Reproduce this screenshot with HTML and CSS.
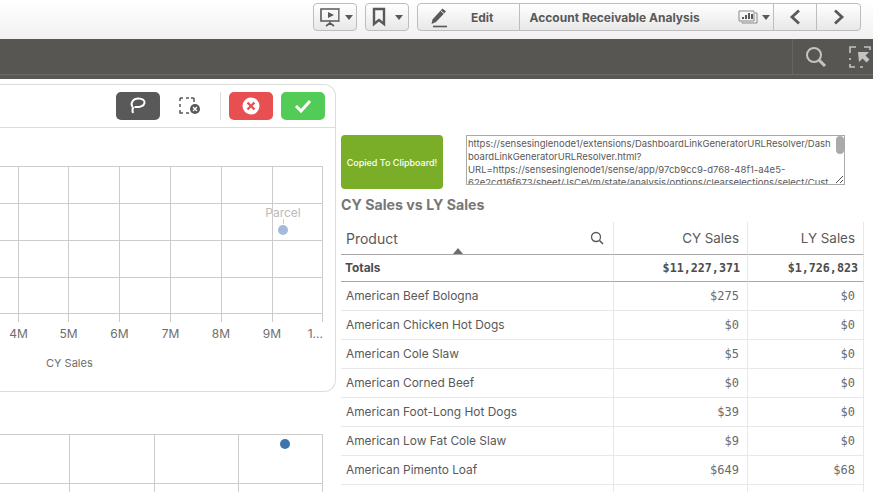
FILE: index.html
```html
<!DOCTYPE html>
<html lang="en">
<head>
  <meta charset="UTF-8" />
  <title>Account Receivable Analysis</title>
  <link rel="stylesheet" href="styles.css">
</head>
<body>
  <header class="toolbar">
    <button class="tool-btn">
      <svg width="26" height="24" viewBox="0 0 26 24"><path d="M3 4h18v12H3z" fill="none" stroke="#595959" stroke-width="1.600"/><path d="M21.500 4v12" stroke="#e0a040"/><path d="M10 7l6 3-6 3z" fill="#595959"/><path d="M12 16v3M8 21l4-3 4 3" fill="none" stroke="#595959" stroke-width="1.600"/></svg>
      <span class="caret"></span>
    </button>
    <button class="tool-btn tool-btn-mark">
      <svg width="14" height="20" viewBox="0 0 14 20"><path d="M2 2h10v15l-5-4-5 4z" fill="none" stroke="#595959" stroke-width="2.400"/></svg>
      <span class="caret"></span>
    </button>
    <div class="btn-group">
      <div class="seg seg-edit">
        <svg width="20" height="22" viewBox="0 0 20 22"><path d="M13.500 2.500l3.500 3L7 16l-4.500 2 1-4.500z" fill="#595959"/><path d="M12 5l3.500 3" stroke="#f4f4f4"/><path d="M4 20.500h14" stroke="#595959" stroke-width="1.600"/></svg>
        <span>Edit</span>
      </div>
      <div class="seg seg-title">
        <span>Account Receivable Analysis</span>
        <svg class="sheet-icon" width="20" height="14" viewBox="0 0 20 14"><path d="M1 1h15v10H1z" fill="none" stroke="#8a8a8a"/><path d="M17 3h2v10H4v-1" fill="none" stroke="#8a8a8a"/><path d="M4 9h2V7H4zM7 9h2V5H7zM10 9h2V3h-2zM13 9h2V4h-2z" fill="#595959"/></svg>
        <span class="caret"></span>
      </div>
      <div class="seg seg-nav">
        <svg width="14" height="18" viewBox="0 0 14 18"><path d="M11 2.500L4 9l7 6.500" fill="none" stroke="#595959" stroke-width="2.800"/></svg>
      </div>
      <div class="seg seg-nav">
        <svg width="14" height="18" viewBox="0 0 14 18"><path d="M3 2.500L10 9l-7 6.500" fill="none" stroke="#595959" stroke-width="2.800"/></svg>
      </div>
    </div>
  </header>

  <div class="darkbar">
    <div class="dark-tools">
      <svg width="24" height="24" viewBox="0 0 24 24"><circle cx="10" cy="10" r="7" fill="none" stroke="#c4c4c4" stroke-width="2"/><path d="M15 15l6 6" stroke="#c4c4c4" stroke-width="3"/></svg>
      <svg width="22" height="22" viewBox="0 0 22 22"><path d="M1 7V1h6M15 1h6v3M1 12v2M1 18v3h5M11 21h3" fill="none" stroke="#c4c4c4" stroke-width="1.600"/><path d="M9 6h11l-3.500 3.500 4 4-3 3-4-4L10 16z" fill="#c4c4c4"/></svg>
    </div>
  </div>
  <div class="darkstrip"></div>

  <main class="content">
    <section class="left">
      <div class="card">
        <div class="card-tools">
          <button class="sel-btn sel-lasso">
            <svg width="20" height="20" viewBox="0 0 20 20"><path d="M4.500 11C2 7 5 2.500 10.500 2.500c4 0 6.500 2 6 4.500-.5 3-5 4.500-10 4" fill="none" stroke="#fff" stroke-width="2"/><path d="M5.500 11c-1 1.500-1.500 3.500-.5 6" fill="none" stroke="#fff" stroke-width="2"/></svg>
          </button>
          <div class="clear-icon">
            <svg width="22" height="20" viewBox="0 0 22 20"><path d="M1 2h3M7 2h3M12 2h3M1 2v3M1 8v3M1 14v3h3M7 17h3M15 2v4" fill="none" stroke="#595959" stroke-width="1.500"/><circle cx="16" cy="13" r="5" fill="#595959"/><path d="M14 11l4 4M18 11l-4 4" stroke="#fff" stroke-width="1.400"/></svg>
          </div>
          <span class="tools-sep"></span>
          <button class="sel-btn sel-cancel">
            <svg width="18" height="18" viewBox="0 0 18 18"><circle cx="9" cy="9" r="8.500" fill="#fff"/><path d="M5.500 5.500l7 7M12.500 5.500l-7 7" stroke="#e84f50" stroke-width="2.400"/></svg>
          </button>
          <button class="sel-btn sel-ok">
            <svg width="18" height="16" viewBox="0 0 18 16"><path d="M2 8l5 5L16 3" fill="none" stroke="#fff" stroke-width="3"/></svg>
          </button>
        </div>

        <div class="plot">
          <div class="cell"></div><div class="cell"></div><div class="cell"></div><div class="cell"></div><div class="cell"></div><div class="cell"></div><div class="cell"></div>
          <div class="cell"></div><div class="cell"></div><div class="cell"></div><div class="cell"></div><div class="cell"></div><div class="cell"></div><div class="cell"></div>
          <div class="cell"></div><div class="cell"></div><div class="cell"></div><div class="cell"></div><div class="cell"></div><div class="cell"></div><div class="cell"></div>
          <div class="cell"></div><div class="cell"></div><div class="cell"></div><div class="cell"></div><div class="cell"></div><div class="cell"></div><div class="cell"></div>
          <div class="tick"></div><div class="tick"></div><div class="tick"></div><div class="tick"></div><div class="tick"></div><div class="tick"></div><div class="tick"></div>
          <span class="point-label">Parcel</span>
          <span class="point-stem"></span>
          <span class="point point-faded"></span>
        </div>
        <div class="axis">
          <span>4M</span><span>5M</span><span>6M</span><span>7M</span><span>8M</span><span>9M</span><span class="axis-last">1...</span>
        </div>
        <div class="axis-title">CY Sales</div>
      </div>

      <div class="plot2">
        <div class="cell"></div><div class="cell"></div><div class="cell"></div><div class="cell"></div>
        <div class="cell"></div><div class="cell"></div><div class="cell"></div><div class="cell"></div>
        <span class="point point-solid"></span>
      </div>
    </section>

    <section class="right">
      <div class="link-row">
        <button class="copied">Copied To Clipboard!</button>
        <div class="url-box">
          <textarea class="url" readonly>https://sensesinglenode1/extensions/DashboardLinkGeneratorURLResolver/DashboardLinkGeneratorURLResolver.html?
URL=https://sensesinglenode1/sense/app/97cb9cc9-d768-48f1-a4e5-62e2cd16f673/sheet/JsCeVm/state/analysis/options/clearselections/select/Customer/American%20Beef%20Bologna/select/Product/American%20Chicken%20Hot%20Dogs</textarea>
          <span class="url-thumb"></span>
          <svg class="url-grip" width="9" height="9" viewBox="0 0 9 9"><path d="M1 8l7-7M5 8l3-3" stroke="#555"/></svg>
        </div>
      </div>
      <h2 class="table-title">CY Sales vs LY Sales</h2>
      <table class="sales">
        <colgroup><col class="col-product"><col class="col-cy"><col class="col-ly"></colgroup>
        <thead>
          <tr>
            <th class="th-product">
              <div class="th-inner">
                <span>Product</span>
                <svg width="14" height="14" viewBox="0 0 14 14"><circle cx="6" cy="6" r="4.500" fill="none" stroke="#595959" stroke-width="1.300"/><path d="M9.500 9.500l3.500 3.500" stroke="#595959" stroke-width="1.600"/></svg>
              </div>
              <span class="sort-arrow"></span>
            </th>
            <th class="num-head">CY Sales</th>
            <th class="num-head">LY Sales</th>
          </tr>
        </thead>
        <tbody>
          <tr class="totals"><td>Totals</td><td class="num">$11,227,371</td><td class="num">$1,726,823</td></tr>
          <tr><td>American Beef Bologna</td><td class="num">$275</td><td class="num">$0</td></tr>
          <tr><td>American Chicken Hot Dogs</td><td class="num">$0</td><td class="num">$0</td></tr>
          <tr><td>American Cole Slaw</td><td class="num">$5</td><td class="num">$0</td></tr>
          <tr><td>American Corned Beef</td><td class="num">$0</td><td class="num">$0</td></tr>
          <tr><td>American Foot-Long Hot Dogs</td><td class="num">$39</td><td class="num">$0</td></tr>
          <tr><td>American Low Fat Cole Slaw</td><td class="num">$9</td><td class="num">$0</td></tr>
          <tr><td>American Pimento Loaf</td><td class="num">$649</td><td class="num">$68</td></tr>
          <tr><td></td><td class="num"></td><td class="num"></td></tr>
        </tbody>
      </table>
    </section>
  </main>
</body>
</html>
```

FILE: styles.css
```css
html, body {
  margin: 0;
  height: 100%;
  overflow: hidden;
}
body {
  font-family: Inter, "Noto Sans", sans-serif;
  font-size: 12px;
  color: #595959;
  background: #fff;
}
button {
  font-family: inherit;
  padding: 0;
}

/* top bar */
.toolbar {
  height: 39px;
  box-sizing: border-box;
  padding: 3px 12px 0 313px;
  display: flex;
  align-items: flex-start;
  gap: 8px;
  background: linear-gradient(#fff, #f1f1f1);
}
.tool-btn, .btn-group {
  height: 28px;
  box-sizing: border-box;
  border: 1px solid #bdbdbd;
  border-radius: 4px;
  background: linear-gradient(#fff, #e8e8e8);
}
.tool-btn {
  width: 44px;
  display: flex;
  align-items: center;
  justify-content: center;
  gap: 1px;
}
.tool-btn-mark {
  gap: 9px;
}
.caret {
  width: 0;
  height: 0;
  border-left: 4px solid transparent;
  border-right: 4px solid transparent;
  border-top: 5px solid #595959;
}
.btn-group {
  display: flex;
  width: 444px;
}
.seg {
  display: flex;
  align-items: center;
  border-right: 1px solid #bdbdbd;
  font-weight: 700;
}
.seg:last-child {
  border-right: none;
}
.seg-edit {
  width: 102px;
  box-sizing: border-box;
  padding-left: 11px;
}
.seg-edit span {
  margin-left: 22px;
}
.seg-title {
  width: 256px;
  box-sizing: border-box;
  padding: 0 3px 0 10px;
}
.sheet-icon {
  margin-left: auto;
  margin-right: 4px;
}
.seg-nav {
  width: 43px;
  box-sizing: border-box;
  justify-content: center;
}

.darkbar {
  height: 35px;
  background: #575653;
  border-bottom: 1px solid #6b6a67;
  display: flex;
  justify-content: flex-end;
}
.dark-tools {
  width: 81px;
  box-sizing: border-box;
  border-left: 1px solid #666562;
  display: flex;
  align-items: center;
  gap: 21px;
  padding-left: 11px;
}
.darkstrip {
  height: 4px;
  background: #595855;
}

/* main */
.content {
  display: flex;
}
.left {
  width: 341px;
  flex: none;
  padding-top: 5px;
}

.card {
  width: 336px;
  height: 308px;
  box-sizing: border-box;
  border: 1px solid #dcdcdc;
  border-left: none;
  border-radius: 0 12px 12px 0;
  overflow: hidden;
}
.card-tools {
  height: 43px;
  box-sizing: border-box;
  border-bottom: 1px solid #dcdcdc;
  padding: 7px 10px 0 0;
  display: flex;
  justify-content: flex-end;
  align-items: flex-start;
}
.sel-btn {
  width: 44px;
  height: 28px;
  border: none;
  border-radius: 5px;
  display: flex;
  align-items: center;
  justify-content: center;
}
.sel-lasso { background: #595959; }
.sel-cancel { background: #e84f50; }
.sel-ok { background: #52cc57; margin-left: 8px; }
.clear-icon {
  width: 22px;
  height: 28px;
  margin: 0 19px;
  display: flex;
  align-items: center;
}
.tools-sep {
  width: 1px;
  height: 28px;
  background: #dcdcdc;
  margin-right: 8px;
}

.plot {
  position: relative;
  margin-top: 38px;
  width: 323px;
  border-top: 1px solid #ccc;
  display: grid;
  grid-template-columns: 19px 50px 51px 51px 51px 51px 50px;
  grid-template-rows: 37px 37px 37px 36px 8px;
}
.cell, .tick {
  box-sizing: border-box;
  border-right: 1px solid #ccc;
}
.cell {
  border-bottom: 1px solid #ccc;
}
.point-label {
  position: absolute;
  left: 253px;
  width: 60px;
  top: 38px;
  text-align: center;
  font-size: 12px;
  color: #bbb;
}
.point-stem {
  position: absolute;
  left: 283px;
  top: 52px;
  width: 1px;
  height: 5px;
  background: #ccc;
}
.point {
  position: absolute;
  width: 10px;
  height: 10px;
  border-radius: 50%;
}
.point-faded {
  left: 278px;
  top: 58px;
  background: #a3bbd9;
}
.axis {
  display: grid;
  grid-template-columns: 37px 63px 39px 63px 38px 64px 19px;
  margin-top: 3px;
  width: 323px;
  text-align: center;
  color: #6e6e6e;
  line-height: 17px;
}
.axis-last {
  text-align: right;
  white-space: nowrap;
}
.axis-title {
  margin-top: 13px;
  padding-left: 46px;
  font-size: 11px;
  color: #6e6e6e;
  line-height: 17px;
}

.plot2 {
  position: relative;
  margin-top: 42px;
  width: 323px;
  border-top: 1px solid #ccc;
  display: grid;
  grid-template-columns: 70px 85px 84px 84px;
  grid-template-rows: 49px 49px;
}
.point-solid {
  left: 280px;
  top: 4px;
  background: #3e74ad;
}

/* right side */
.right {
  flex: 1;
  min-width: 0;
  padding-top: 56px;
}
.link-row {
  display: flex;
  align-items: flex-start;
}
.copied {
  width: 102px;
  height: 54px;
  flex: none;
  border: none;
  border-radius: 4px;
  background: #7aad28;
  color: #fff;
  font-size: 9px;
  font-weight: 500;
}
.url-box {
  position: relative;
  width: 379px;
  height: 50px;
  margin-left: 23px;
}
.url {
  display: block;
  width: 100%;
  height: 100%;
  box-sizing: border-box;
  margin: 0;
  padding: 1px 11px 0 1px;
  border: 1px solid #a9a9a9;
  border-radius: 0;
  outline: none;
  resize: none;
  font-family: Inter, "Noto Sans", sans-serif;
  font-size: 9.500px;
  line-height: 13px;
  color: #595959;
  overflow: hidden;
  overflow-wrap: anywhere;
}
.url-thumb {
  position: absolute;
  right: 1px;
  top: 1px;
  width: 8px;
  height: 18px;
  border-radius: 4px;
  background: #aaa;
}
.url-grip {
  position: absolute;
  right: 1px;
  bottom: 1px;
  background: #fff;
}
.table-title {
  margin: 4px 0 0;
  height: 29px;
  font-size: 14.200px;
  line-height: 24px;
  font-weight: 700;
  color: #777;
}

.sales {
  width: 523px;
  table-layout: fixed;
  border-collapse: separate;
  border-spacing: 0;
}
.col-product { width: 273px; }
.col-cy { width: 134px; }
.col-ly { width: 116px; }
.sales th, .sales td {
  box-sizing: border-box;
  padding: 0 5px 1px;
  border-right: 1px solid #e8e8e8;
  border-bottom: 1px solid #e8e8e8;
  white-space: nowrap;
  overflow: hidden;
  font-size: 11.900px;
}
.sales th {
  height: 33px;
  font-size: 14px;
  font-weight: 400;
  color: #595959;
  border-bottom-color: #a8a8a8;
  padding-bottom: 0;
}
.th-product {
  position: relative;
  text-align: left;
}
.th-inner {
  display: flex;
  align-items: center;
  justify-content: space-between;
  padding-right: 4px;
}
.sort-arrow {
  position: absolute;
  left: 112px;
  bottom: 0;
  width: 0;
  height: 0;
  border-left: 5px solid transparent;
  border-right: 5px solid transparent;
  border-bottom: 6px solid #6e6e6e;
}
.sales th.num-head {
  text-align: right;
  padding-right: 8px;
  font-size: 13.400px;
}
.sales td {
  height: 29px;
}
.sales tr.totals td {
  height: 27px;
  font-weight: 700;
  border-bottom-color: #a8a8a8;
  padding-left: 4px;
  color: #4d4d4d;
}
.sales td.num {
  text-align: right;
  font-family: "DejaVu Sans Mono", monospace;
  font-size: 12px;
  color: #6a6a6a;
  padding-right: 8px;
}
.sales tr.totals td.num {
  font-size: 11.700px;
  padding-right: 5px;
  color: #4d4d4d;
}
.sales tr.totals td.num:nth-child(2) {
  padding-right: 7px;
}
```
